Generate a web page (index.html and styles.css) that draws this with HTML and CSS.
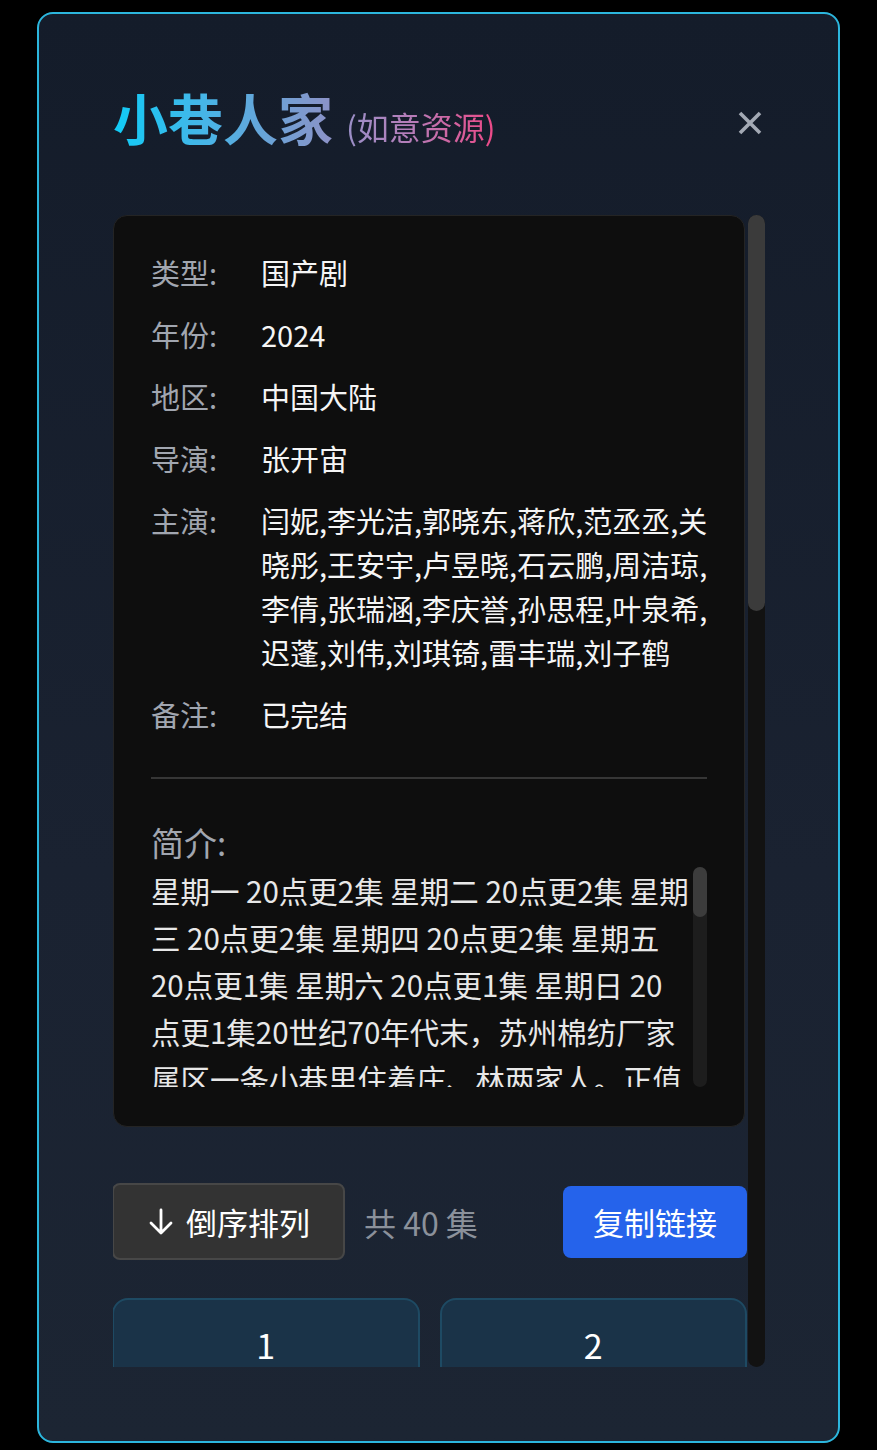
FILE: index.html
```html
<!DOCTYPE html>
<html lang="zh-CN">
<head>
    <meta charset="UTF-8">
    <meta name="viewport" content="width=device-width, initial-scale=1.0">
    <title>小巷人家</title>
    <link rel="stylesheet" href="styles.css">
</head>
<body>
    <div class="modal">
        <div class="modal-head">
            <h2 class="title"><span class="title-main">小巷人家</span><span class="title-source">(如意资源)</span></h2>
            <button class="close-btn" aria-label="关闭">
                <svg width="28" height="28" viewBox="0 0 28 28">
                    <path d="M4 4 L24 24 M24 4 L4 24" stroke="#a3a9b4" stroke-width="3.6"/>
                </svg>
            </button>
        </div>

        <div class="body-wrap">
            <div class="scroll-content">
                <div class="info-box">
                    <div class="info-row"><span class="label">类型:</span><span class="value">国产剧</span></div>
                    <div class="info-row"><span class="label">年份:</span><span class="value">2024</span></div>
                    <div class="info-row"><span class="label">地区:</span><span class="value">中国大陆</span></div>
                    <div class="info-row"><span class="label">导演:</span><span class="value">张开宙</span></div>
                    <div class="info-row"><span class="label">主演:</span><span class="value">闫妮,李光洁,郭晓东,蒋欣,范丞丞,关晓彤,王安宇,卢昱晓,石云鹏,周洁琼,李倩,张瑞涵,李庆誉,孙思程,叶泉希,迟蓬,刘伟,刘琪锜,雷丰瑞,刘子鹤</span></div>
                    <div class="info-row"><span class="label">备注:</span><span class="value">已完结</span></div>

                    <div class="divider"></div>

                    <h3 class="intro-title">简介:</h3>
                    <div class="intro">
                        <div class="intro-text">星期一 20点更2集 星期二 20点更2集 星期三 20点更2集 星期四 20点更2集 星期五 20点更1集 星期六 20点更1集 星期日 20点更1集20世纪70年代末，苏州棉纺厂家属区一条小巷里住着庄、林两家人。正值恢复高考，两家人的命运随着时代浪潮起伏变化。庄家的黄玲与庄超英夫妇，林家的宋莹与林武峰夫妇，在柴米油盐的日子里守望相助，共同面对下岗、住房、子女升学等种种难题。孩子们在小巷里一起长大，几十年间，邻里之间的情谊愈发深厚。</div>
                        <div class="intro-bar"><div class="intro-thumb"></div></div>
                    </div>
                </div>

                <div class="toolbar">
                    <button class="sort-btn">
                        <svg width="26" height="30" viewBox="0 0 26 30">
                            <path d="M13 3 V26 M3 16 L13 26 L23 16" fill="none" stroke="#ffffff" stroke-width="2.8" stroke-linecap="round" stroke-linejoin="round"/>
                        </svg>
                        倒序排列
                    </button>
                    <span class="count">共 40 集</span>
                    <button class="copy-btn">复制链接</button>
                </div>

                <div class="episodes" id="episodes"></div>
            </div>
            <div class="scrollbar"><div class="scroll-thumb"></div></div>
        </div>
    </div>

    <script>
        var list = document.getElementById('episodes');
        for (var i = 1; i <= 40; i++) {
            var ep = document.createElement('div');
            ep.className = 'episode';
            ep.innerText = i;
            list.appendChild(ep);
        }
    </script>
</body>
</html>
```

FILE: styles.css
```css
body {
    margin: 0;
    padding: 0;
    background: #000000;
    font-family: "Noto Sans CJK SC", "Noto Sans", sans-serif;
    color: #f2f2f2;
}

.modal {
    box-sizing: border-box;
    margin: 12px 37px 0 37px;
    height: 1431px;
    border: 2px solid #2cb6dd;
    border-radius: 16px;
    background: linear-gradient(180deg, #141c2a 0%, #1a2231 60%, #1c2533 100%);
    padding: 0 73px 0 74px;
    overflow: hidden;
}

.modal-head {
    display: flex;
    align-items: center;
    justify-content: space-between;
    padding-top: 79px;
    height: 60px;
    margin-bottom: 62px;
}

.title {
    margin: 0;
    font-weight: 700;
    line-height: 60px;
    white-space: nowrap;
}

.title-main {
    font-size: 55px;
    background: linear-gradient(90deg, #10cbf6 0%, #4bb3e6 45%, #8d91c6 100%);
    -webkit-background-clip: text;
    background-clip: text;
    color: transparent;
}

.title-source {
    font-size: 32px;
    font-weight: 400;
    margin-left: 13px;
    background: linear-gradient(90deg, #9a90c8 0%, #b77cb8 45%, #ee4886 100%);
    -webkit-background-clip: text;
    background-clip: text;
    color: transparent;
}

.close-btn {
    background: none;
    border: none;
    padding: 0;
    margin-right: 1px;
    width: 28px;
    height: 28px;
    cursor: pointer;
}

.body-wrap {
    display: flex;
    gap: 1px;
    height: 1152px;
}

.scroll-content {
    flex: 1;
    min-width: 0;
    overflow: hidden;
}

.scrollbar {
    flex: 0 0 17px;
    background: #121212;
    border-radius: 9px;
}

.scroll-thumb {
    height: 396px;
    background: #3b3b3b;
    border-radius: 9px;
}

.info-box {
    box-sizing: border-box;
    margin-right: 2px;
    background: #0e0e0e;
    border: 1px solid #242424;
    border-radius: 14px;
    padding: 34px 37px 39px 37px;
}

.info-row {
    display: flex;
    font-size: 29px;
    line-height: 44px;
    margin-bottom: 18px;
    margin-right: -6px;
}

.label {
    flex: 0 0 110px;
    color: #a1a6b0;
}

.value {
    flex: 1;
    color: #f5f5f5;
}

.divider {
    height: 2px;
    background: #363636;
    margin: 41px 0 41px 0;
}

.intro-title {
    margin: 0 0 3px 0;
    font-size: 33px;
    font-weight: 400;
    line-height: 44px;
    color: #a1a6b0;
}

.intro {
    display: flex;
    justify-content: space-between;
    height: 220px;
}

.intro-text {
    flex: 0 0 538px;
    overflow: hidden;
    font-size: 29.5px;
    line-height: 47px;
    color: #e8e8e8;
}

.intro-bar {
    flex: 0 0 14px;
    background: #1d1d1d;
    border-radius: 7px;
}

.intro-thumb {
    height: 50px;
    background: #3c3c3c;
    border-radius: 7px;
}

.toolbar {
    display: flex;
    align-items: center;
    margin-top: 56px;
    height: 77px;
}

.sort-btn {
    display: flex;
    align-items: center;
    gap: 12px;
    box-sizing: border-box;
    height: 77px;
    width: 233px;
    margin-left: -1px;
    padding: 0 0 0 34px;
    background: #333333;
    border: 2px solid #474747;
    border-radius: 8px;
    color: #ffffff;
    font-family: inherit;
    font-size: 31px;
    cursor: pointer;
}

.count {
    margin-left: 19px;
    font-size: 32px;
    color: #8b919b;
}

.copy-btn {
    margin-left: auto;
    height: 72px;
    padding: 0 30px;
    background: #2563eb;
    border: none;
    border-radius: 8px;
    color: #ffffff;
    font-family: inherit;
    font-size: 31px;
    cursor: pointer;
}

.episodes {
    display: grid;
    grid-template-columns: 1fr 1fr;
    gap: 20px;
    margin-top: 38px;
    margin-left: -1px;
}

.episode {
    box-sizing: border-box;
    height: 92px;
    display: flex;
    align-items: center;
    justify-content: center;
    background: #1a3348;
    border: 2px solid #1e4a63;
    border-radius: 16px;
    font-size: 34px;
    color: #ffffff;
}
```
